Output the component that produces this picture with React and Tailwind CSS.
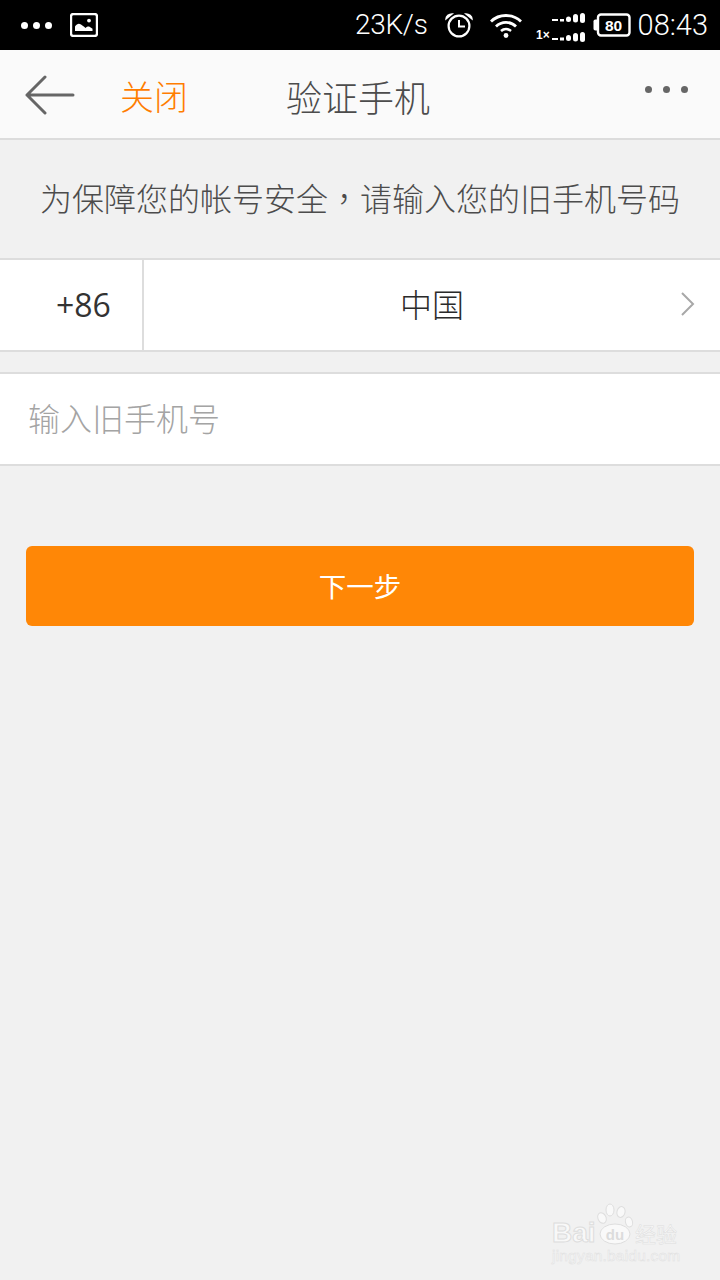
import React from "react";

const CJK = '"Noto Sans CJK SC","Roboto","Noto Sans",sans-serif';

function StatusBar() {
  return (
    <div className="h-[50px] bg-black flex items-center text-white shrink-0" style={{ fontFamily: "Roboto, sans-serif" }}>
      <div className="ml-[21px] flex gap-[5px]">
        <div className="w-[7px] h-[7px] rounded-full bg-white" />
        <div className="w-[7px] h-[7px] rounded-full bg-white" />
        <div className="w-[7px] h-[7px] rounded-full bg-white" />
      </div>
      <svg className="ml-[18px]" width="28" height="24" viewBox="0 0 28 24">
        <rect x="1" y="1" width="26" height="22" rx="2.5" fill="none" stroke="#fff" strokeWidth="2.4" />
        <path d="M5 18v-4.5c2-3 4-3.5 6-2 2 1.5 3 2 4.5 3.5 1.5-1.500 3-1.800 4-1.300 1 .5 2 1.300 3 2V18z" fill="#fff" />
        <circle cx="19" cy="7.6" r="1.9" fill="#fff" />
      </svg>
      <div className="ml-auto flex items-center">
        <span className="text-[28px] font-light leading-none tracking-[-0.3px]">23K/s</span>
        <svg className="ml-[16px]" width="30" height="28" viewBox="0 0 30 28">
          <circle cx="15" cy="15" r="10.4" fill="none" stroke="#fff" strokeWidth="2.2" />
          <path d="M15 9v6.500h6" fill="none" stroke="#fff" strokeWidth="2" />
          <path d="M2 8c0-3 3-5 6-5zM28 8c0-3-3-5-6-5z" fill="#fff" stroke="#fff" strokeWidth="1.5" />
        </svg>
        <svg className="ml-[15px]" width="34" height="26" viewBox="0 0 34 26">
          <path d="M2 9.500C10 1.500 24 1.500 32 9.500" fill="none" stroke="#fff" strokeWidth="2.8" />
          <path d="M7 14.500C12.500 9 21.500 9 27 14.500" fill="none" stroke="#fff" strokeWidth="2.8" />
          <path d="M12 19c3-2.600 7-2.600 10 0" fill="none" stroke="#fff" strokeWidth="2.6" />
          <circle cx="17" cy="23.5" r="2.4" fill="#fff" />
        </svg>
        <svg className="ml-[13px]" width="50" height="34" viewBox="0 0 50 34">
          <g fill="#fff" transform="translate(0 5)">
            <rect x="16" y="6" width="6" height="2" />
            <rect x="24" y="6" width="4" height="2.500" />
            <rect x="30" y="3.500" width="5" height="5.500" rx="2.500" />
            <rect x="37" y="1" width="5" height="8.500" rx="2.500" />
            <rect x="44" y="0" width="5" height="10" rx="2.500" />
          </g>
          <g fill="#fff" transform="translate(0 4)">
            <rect x="16" y="26" width="6" height="2" />
            <rect x="24" y="25.500" width="4" height="3" />
            <rect x="30" y="23" width="5" height="6" rx="2.500" />
            <rect x="37" y="21" width="5" height="8.500" rx="2.500" />
            <rect x="44" y="20" width="5" height="10" rx="2.500" />
          </g>
          <text x="0" y="31" fontFamily="Liberation Sans" fontWeight="700" fontSize="12" fill="#fff">1×</text>
        </svg>
        <svg className="ml-[7px]" width="38" height="24" viewBox="0 0 38 24">
          <path d="M4 6.500H2.500C1.200 6.500.5 7.300.5 8.500v7c0 1.200.7 2 2 2H4z" fill="#fff" />
          <rect x="5" y="1.500" width="31.500" height="21" rx="3" fill="none" stroke="#fff" strokeWidth="2.4" />
          <text x="20.500" y="18" textAnchor="middle" fontFamily="Liberation Sans" fontWeight="700" fontSize="15.500" fill="#fff">80</text>
        </svg>
        <span className="ml-[7px] mr-[12px] text-[29px] font-light leading-none">08:43</span>
      </div>
    </div>
  );
}

function Header() {
  return (
    <div className="relative h-[90px] bg-[#fafafa] border-b-2 border-[#dcdcdc] shrink-0 flex items-start">
      <svg className="ml-[25px] mt-[25px]" width="50" height="40" viewBox="0 0 50 40">
        <path d="M48 20H2M20 2 2 20l18 18" fill="none" stroke="#666" strokeWidth="3" strokeLinecap="round" strokeLinejoin="round" />
      </svg>
      <span className="ml-[45px] mt-[22px] text-[34px] leading-[48px] font-light text-[#ff7d00]">关闭</span>
      <span className="ml-[98px] mt-[22px] text-[36px] leading-[48px] font-light text-[#4c4c4c]">验证手机</span>
      <div className="ml-auto mr-[32px] mt-[36px] flex gap-[11px]">
        <div className="w-[7px] h-[7px] rounded-full bg-[#666]" />
        <div className="w-[7px] h-[7px] rounded-full bg-[#666]" />
        <div className="w-[7px] h-[7px] rounded-full bg-[#666]" />
      </div>
    </div>
  );
}

function Watermark() {
  return (
    <div className="absolute left-[552px] top-[1202px] w-[130px] h-[64px] text-[#f8f8f8]" style={{ fontFamily: '"Liberation Sans", sans-serif' }}>
      <svg className="absolute left-[45px] top-[1px]" width="37" height="42" viewBox="0 0 37 42">
        <g fill="#f9f9f9" stroke="#dedede" strokeWidth="1">
          <ellipse cx="5" cy="15" rx="4" ry="5.500" transform="rotate(-25 5 15)" />
          <ellipse cx="13" cy="7" rx="4" ry="6" />
          <ellipse cx="24" cy="9" rx="4" ry="5.500" transform="rotate(15 24 9)" />
          <ellipse cx="32" cy="19" rx="3.500" ry="5" transform="rotate(-15 32 19)" />
          <ellipse cx="18" cy="31" rx="15" ry="10" />
        </g>
        <text x="18" y="37" textAnchor="middle" fontSize="15" fontWeight="700" fill="#dcdcdc">du</text>
      </svg>
      <span className="absolute left-0 top-[16px] text-[28px] font-bold leading-[30px] [-webkit-text-stroke:1px_#dddddd]">Bai</span>
      <span className="absolute left-[83px] top-[19px] text-[21px] leading-[24px] [-webkit-text-stroke:0.5px_#dddddd]" style={{ fontFamily: CJK }}>经验</span>
      <span className="absolute left-0 top-[45px] text-[15.500px] leading-[17px] tracking-[0.2px] text-[#f7f7f7] [-webkit-text-stroke:0.5px_#e0e0e0]">jingyan.baidu.com</span>
    </div>
  );
}

export default function App() {
  return (
    <div className="relative w-[720px] h-[1280px] bg-[#f1f1f1] flex flex-col overflow-hidden" style={{ fontFamily: CJK }}>
      <StatusBar />
      <Header />
      <div className="h-[118px] flex items-center justify-center text-[32px] font-light text-[#4c4c4c] shrink-0 pb-[5px]">
        为保障您的帐号安全<span style={{ fontFamily: '"Noto Sans CJK TC",sans-serif' }}>，</span>请输入您的旧手机号码
      </div>
      <div className="h-[94px] bg-white border-y-2 border-[#dddddd] flex shrink-0">
        <div className="w-[144px] border-r-2 border-[#dddddd] flex items-center shrink-0">
          <span className="ml-[56px] text-[32px] text-[#333]" style={{ fontFamily: '"Open Sans", sans-serif' }}>+86</span>
        </div>
        <div className="relative flex-1 flex items-center justify-center">
          <span className="text-[32px] font-light text-[#2a2a2a] mt-[-4px]">中国</span>
          <svg className="absolute right-[24px] top-[31px]" width="16" height="26" viewBox="0 0 16 26">
            <path d="M2 2l11 11L2 24" fill="none" stroke="#a8a8a8" strokeWidth="2" />
          </svg>
        </div>
      </div>
      <div className="h-[20px] shrink-0" />
      <div className="h-[94px] bg-white border-y-2 border-[#dddddd] flex items-center shrink-0">
        <span className="ml-[28px] text-[32px] font-light text-[#a4a4a4] mt-[-5px]">输入旧手机号</span>
      </div>
      <div className="mt-[80px] mx-[26px] h-[80px] rounded-[6px] bg-[#ff8706] flex items-center justify-center text-white text-[27.500px] shrink-0">
        下一步
      </div>
      <Watermark />
    </div>
  );
}
